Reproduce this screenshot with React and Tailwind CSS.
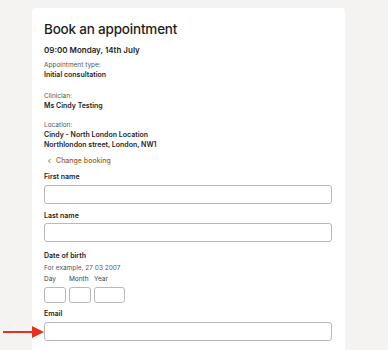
import React from 'react';

const Label = ({ children, className = '' }) => (
  <div className={`text-[7px] leading-[10px] font-semibold text-[#222] ${className}`}>{children}</div>
);

const TextInput = ({ className = '' }) => (
  <input
    type="text"
    className={`block h-[19px] w-[288px] rounded-[3px] border border-[#b8b8b8] bg-white outline-none ${className}`}
  />
);

const DateBox = ({ label, width }) => (
  <div className={`flex flex-col ${width}`}>
    <span>{label}</span>
    <input type="text" className={`mt-[3px] h-[16px] rounded-[3px] border border-[#b8b8b8] outline-none ${width}`} />
  </div>
);

export default function App() {
  return (
    <div className="relative h-[350px] w-full overflow-hidden bg-[#f4f3f1] pt-[8px] font-['Inter','Liberation_Sans',sans-serif] text-[#1e1e1e]">
      <div className="ml-[32px] w-[313px] rounded-t-[4px] bg-white px-[12px] pb-[40px] pt-[11px]">
        <h1 className="text-[13.5px] leading-[20px] font-medium tracking-[-0.2px]">Book an appointment</h1>
        <div className="mt-[5px] text-[8px] leading-[12px] font-semibold">09:00 Monday, 14th July</div>

        <div className="mt-[5px] text-[6.5px] leading-[9px] text-[#555]">Appointment type:</div>
        <div className="text-[7px] leading-[10px] font-semibold">Initial consultation</div>

        <div className="mt-[12px] text-[6.5px] leading-[9px] text-[#555]">Clinician:</div>
        <div className="text-[7px] leading-[10px] font-semibold">Ms Cindy Testing</div>

        <div className="mt-[10px] text-[6.5px] leading-[9px] text-[#555]">Location:</div>
        <div className="text-[7px] leading-[10px] font-semibold">Cindy - North London Location</div>
        <div className="text-[7px] leading-[10px] font-semibold">Northlondon street, London, NW1</div>

        <a href="#" className="mt-[6px] flex items-center text-[7px] leading-[10px] font-medium text-[#9e5f26]">
          <svg width="7" height="10" viewBox="0 0 7 10" className="ml-[2px] mr-[3px]">
            <path d="M4.5 3 L2.5 5 L4.5 7" fill="none" stroke="#9e5f26" strokeWidth="0.9" />
          </svg>
          Change booking
        </a>

        <Label className="mt-[6px]">First name</Label>
        <TextInput className="mt-[3px]" />

        <Label className="mt-[7px]">Last name</Label>
        <TextInput className="mt-[2px]" />

        <Label className="mt-[9px]">Date of birth</Label>
        <div className="mt-[2px] text-[6.5px] leading-[10px] text-[#555]">For example, 27 03 2007</div>
        <div className="mt-[1px] flex gap-[3px] text-[6.5px] leading-[10px] text-[#444]">
          <DateBox label="Day" width="w-[22px]" />
          <DateBox label="Month" width="w-[22px]" />
          <DateBox label="Year" width="w-[31px]" />
        </div>

        <Label className="mt-[6px]">Email</Label>
        <TextInput className="mt-[3px]" />
      </div>

      {/* annotation arrow */}
      <svg className="absolute left-[3px] top-[325px]" width="42" height="14" viewBox="0 0 42 14">
        <line x1="0" y1="7" x2="30" y2="7" stroke="#e5311f" strokeWidth="2" />
        <polygon points="29,1 41,7 29,13" fill="#e5311f" />
      </svg>
    </div>
  );
}
